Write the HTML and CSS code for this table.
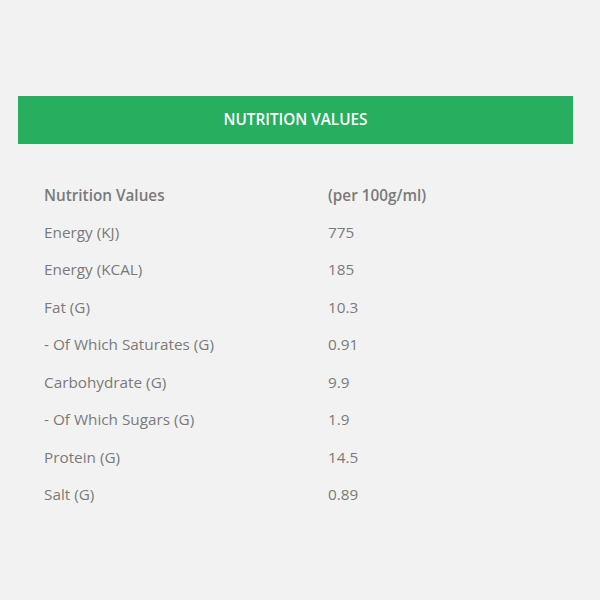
FILE: index.html
```html
<!DOCTYPE html>
<html>
<head>
<meta charset="utf-8">
<link rel="stylesheet" href="styles.css">
</head>
<body>
<div class="wrap">
  <div class="bar">NUTRITION VALUES</div>
  <div class="table">
    <div class="row head"><span>Nutrition Values</span><span>(per 100g/ml)</span></div>
    <div class="row"><span>Energy (KJ)</span><span>775</span></div>
    <div class="row"><span>Energy (KCAL)</span><span>185</span></div>
    <div class="row"><span>Fat (G)</span><span>10.3</span></div>
    <div class="row"><span>- Of Which Saturates (G)</span><span>0.91</span></div>
    <div class="row"><span>Carbohydrate (G)</span><span>9.9</span></div>
    <div class="row"><span>- Of Which Sugars (G)</span><span>1.9</span></div>
    <div class="row"><span>Protein (G)</span><span>14.5</span></div>
    <div class="row"><span>Salt (G)</span><span>0.89</span></div>
  </div>
</div>
</body>
</html>
```
FILE: styles.css
```css
html, body {
  margin: 0;
  padding: 0;
  background: #f2f2f2;
  font-family: "Open Sans", sans-serif;
}
.wrap {
  padding: 96px 27px 0 18px;
}
.bar {
  background: #27ae5e;
  color: #ffffff;
  font-weight: 600;
  font-size: 15.3px;
  height: 48px;
  line-height: 46px;
  text-align: center;
}
.table {
  margin-top: 32px;
  padding: 0 26px;
  color: #7a7a7a;
  font-size: 15.3px;
}
.row {
  display: grid;
  grid-template-columns: 284px 1fr;
  height: 37.5px;
  line-height: 37.5px;
}
.head {
  font-weight: 600;
  line-height: 39px;
}
```
